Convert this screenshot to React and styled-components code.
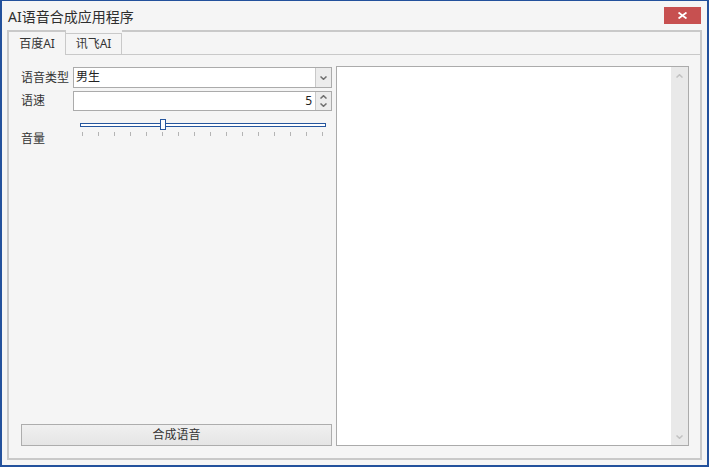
import styled, { createGlobalStyle } from "styled-components"

const GlobalStyle = createGlobalStyle`
    html, body {
        margin: 0;
        padding: 0;
        overflow: hidden;
    }
    * {
        box-sizing: border-box;
    }
`

const Window = styled.div`
    width: 709px;
    height: 467px;
    display: flex;
    flex-direction: column;
    background-color: #f5f5f5;
    border: 2px solid #23519c;
    border-top-width: 1px;
    font-family: "Noto Sans", "Noto Sans CJK SC", sans-serif;
    color: #333;
`

const TitleBar = styled.div`
    height: 29px;
    display: flex;
    justify-content: space-between;
    align-items: flex-start;
    padding: 0 6px;
`

const Title = styled.div`
    margin-top: 6px;
    font-size: 14px;
    line-height: 19px;
    color: #2e2e2e;
`

const CloseButton = styled.div`
    margin-top: 6px;
    width: 37px;
    height: 17px;
    background-color: #c75050;
    display: flex;
    align-items: center;
    justify-content: center;
`

const Body = styled.div`
    flex: 1;
    display: flex;
    padding: 0 5px 5px 5px;
`

const Frame = styled.div`
    flex: 1;
    display: flex;
    flex-direction: column;
    border: 2px solid #c9c9c9;
    border-top: none;
`

const TabStrip = styled.div`
    height: 25px;
    display: flex;
    align-items: flex-end;
    border-bottom: 1px solid #c9c9c9;
`

const Tab = styled.div`
    width: ${props => props.active ? "57px" : "56px"};
    height: ${props => props.active ? "25px" : "21px"};
    margin-bottom: ${props => props.active ? "-1px" : "0"};
    padding-top: ${props => props.active ? "5px" : "3px"};
    border-top: ${props => props.active ? "2px" : "1px"} solid #c9c9c9;
    border-right: 1px solid #c9c9c9;
    background-color: #f5f5f5;
    font-size: 12px;
    line-height: 14px;
    text-align: center;
    color: #333;
`

const TabFiller = styled.div`
    flex: 1;
    align-self: stretch;
    border-top: 2px solid #c9c9c9;
`

const Panel = styled.div`
    flex: 1;
    display: flex;
    gap: 4px;
    padding: 11px 11px 12px 12px;
`

const LeftColumn = styled.div`
    width: 311px;
    display: flex;
    flex-direction: column;
`

const FieldRow = styled.div`
    display: flex;
    align-items: center;
    margin-top: ${props => props.top}px;
    height: ${props => props.h}px;
`

const Label = styled.div`
    width: 52px;
    font-size: 12px;
    line-height: 14px;
    color: #333;
`

const Input = styled.div`
    flex: 1;
    height: 100%;
    display: flex;
    border: 1px solid #ababab;
    background-color: #fff;
`

const InputText = styled.div`
    flex: 1;
    font-size: 12px;
    line-height: ${props => props.lh}px;
    padding: 0 ${props => props.right ? "3px" : "2px"};
    text-align: ${props => props.right ? "right" : "left"};
    color: #222;
`

const SideButton = styled.div`
    width: 16px;
    display: flex;
    flex-direction: column;
    align-items: center;
    justify-content: ${props => props.split ? "space-between" : "center"};
    padding: ${props => props.split ? "3px 0" : "0"};
    border-left: 1px solid #c8c8c8;
    background-color: #ececec;
`

const VolumeRow = styled.div`
    display: flex;
    align-items: flex-start;
    margin-top: 8px;
`

const VolumeLabel = styled(Label)`
    width: 59px;
    margin-top: 13px;
    line-height: 13px;
`

const Slider = styled.div`
    position: relative;
    width: 246px;
`

const Track = styled.div`
    margin-top: 4px;
    height: 4px;
    border: 1px solid #26569e;
    background-color: #fff;
`

const Thumb = styled.div`
    position: absolute;
    top: 0;
    left: ${props => props.pos}px;
    width: 6px;
    height: 11px;
    border: 1px solid #26569e;
    background-color: #fff;
`

const Ticks = styled.div`
    margin: 5px 0 0 2px;
    width: 241px;
    display: flex;
    justify-content: space-between;
`

const Tick = styled.div`
    width: 1px;
    height: 4px;
    background-color: #b4b4b4;
`

const Spacer = styled.div`
    flex: 1;
`

const Button = styled.div`
    height: 22px;
    border: 1px solid #adadad;
    background: linear-gradient(#f0f0f0, #e5e5e5);
    font-size: 12px;
    line-height: 20px;
    text-align: center;
    color: #333;
`

const Output = styled.div`
    flex: 1;
    display: flex;
    justify-content: flex-end;
    border: 1px solid #ababab;
    background-color: #fff;
`

const ScrollBar = styled.div`
    width: 17px;
    display: flex;
    flex-direction: column;
    align-items: center;
    justify-content: space-between;
    padding: 7px 0 6px;
    background-color: #e9e9e9;
`

const Chevron = ({ up, color = "#6f6f6f" }) => (
    <svg width="7" height="4" viewBox="0 0 7 4">
        <path
            d={up ? "M0.5 3.5 L3.5 0.7 L6.5 3.5" : "M0.5 0.5 L3.5 3.3 L6.5 0.5"}
            fill="none"
            stroke={color}
            strokeWidth="1.5"
        />
    </svg>
)

const App = () => {
    const ticks = Array.from({ length: 16 })

    return (
        <>
            <GlobalStyle />
            <Window>
                <TitleBar>
                    <Title>AI语音合成应用程序</Title>
                    <CloseButton>
                        <svg width="9" height="7" viewBox="0 0 9 7">
                            <path d="M0.5 0.5 L8.5 6.5 M8.5 0.5 L0.5 6.5" stroke="#fff" strokeWidth="1.8" />
                        </svg>
                    </CloseButton>
                </TitleBar>
                <Body>
                    <Frame>
                        <TabStrip>
                            <Tab active>百度AI</Tab>
                            <Tab>讯飞AI</Tab>
                            <TabFiller />
                        </TabStrip>
                        <Panel>
                            <LeftColumn>
                                <FieldRow top={1} h={21}>
                                    <Label>语音类型</Label>
                                    <Input>
                                        <InputText lh={18}>男生</InputText>
                                        <SideButton>
                                            <Chevron />
                                        </SideButton>
                                    </Input>
                                </FieldRow>
                                <FieldRow top={3} h={20}>
                                    <Label>语速</Label>
                                    <Input>
                                        <InputText lh={18} right>5</InputText>
                                        <SideButton split>
                                            <Chevron up />
                                            <Chevron />
                                        </SideButton>
                                    </Input>
                                </FieldRow>
                                <VolumeRow>
                                    <VolumeLabel>音量</VolumeLabel>
                                    <Slider>
                                        <Track />
                                        <Thumb pos={80} />
                                        <Ticks>
                                            {ticks.map((_, i) => <Tick key={i} />)}
                                        </Ticks>
                                    </Slider>
                                </VolumeRow>
                                <Spacer />
                                <Button>合成语音</Button>
                            </LeftColumn>
                            <Output>
                                <ScrollBar>
                                    <Chevron up color="#c2c2c2" />
                                    <Chevron color="#c2c2c2" />
                                </ScrollBar>
                            </Output>
                        </Panel>
                    </Frame>
                </Body>
            </Window>
        </>
    )
}

export default App
